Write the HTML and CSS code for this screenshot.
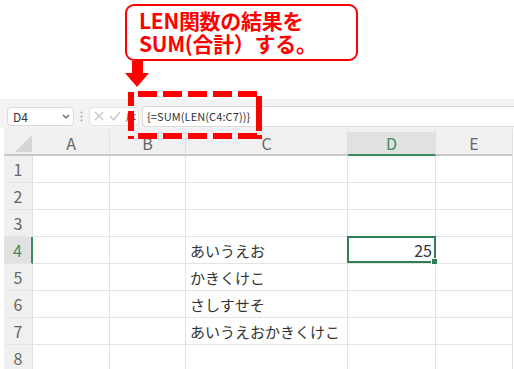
FILE: index.html
```html
<!DOCTYPE html>
<html>

<head>
    <meta charset="utf-8">
    <meta name="viewport" content="width=device-width, initial-scale=1">
    <link rel="stylesheet" href="styles.css">
</head>

<body>
    <!-- annotation: callout, arrow, dashed frame -->
    <div class="callout">LEN関数の結果を<br>SUM(合計）する。</div>
    <svg class="marks" width="514" height="369" viewBox="0 0 514 369">
        <rect x="132" y="61" width="11" height="13" fill="#ff0000" />
        <polygon points="125,73 149,73 137,87" fill="#ff0000" />
        <g stroke="#ff0000" stroke-width="6" fill="none">
            <path d="M138 94 H257" stroke-dasharray="19 6" />
            <path d="M138 136 H257" stroke-dasharray="19 6" />
            <path d="M131 92 V139" stroke-dasharray="14 5 20 5 4 40" />
            <path d="M259 96 V131 M259 135 V139" />
        </g>
    </svg>

    <div class="formula-bar">
        <div class="name-box">
            <span>D4</span>
            <svg width="8" height="5" viewBox="0 0 8 5">
                <path d="M1 1 L4 4 L7 1" stroke="#555" stroke-width="1.2" fill="none" />
            </svg>
        </div>
        <svg class="grip" width="3" height="11" viewBox="0 0 3 11">
            <circle cx="1.5" cy="1.5" r="1" fill="#aaa" />
            <circle cx="1.5" cy="5.5" r="1" fill="#aaa" />
            <circle cx="1.5" cy="9.5" r="1" fill="#aaa" />
        </svg>
        <div class="fn-box">
            <svg width="10" height="10" viewBox="0 0 10 10">
                <path d="M1 1 L9 9 M9 1 L1 9" stroke="#c4c4c4" stroke-width="1.2" />
            </svg>
            <svg width="12" height="10" viewBox="0 0 12 10">
                <path d="M1 5 L4.5 9 L11 1" stroke="#c4c4c4" stroke-width="1.2" fill="none" />
            </svg>
            <span class="fx"><i>f</i>x</span>
        </div>
        <div class="formula">{=SUM(LEN(C4:C7))}</div>
    </div>

    <div class="sheet">
        <div class="corner"><span class="tri"></span></div>
        <div class="col-head">A</div>
        <div class="col-head">B</div>
        <div class="col-head">C</div>
        <div class="col-head sel">D</div>
        <div class="col-head">E</div>

        <div class="row-head">1</div>
        <div class="cell"></div><div class="cell"></div><div class="cell"></div><div class="cell"></div><div class="cell"></div>

        <div class="row-head">2</div>
        <div class="cell"></div><div class="cell"></div><div class="cell"></div><div class="cell"></div><div class="cell"></div>

        <div class="row-head">3</div>
        <div class="cell"></div><div class="cell"></div><div class="cell"></div><div class="cell"></div><div class="cell"></div>

        <div class="row-head sel">4</div>
        <div class="cell"></div><div class="cell"></div>
        <div class="cell">あいうえお</div>
        <div class="cell num active">25</div>
        <div class="cell"></div>

        <div class="row-head">5</div>
        <div class="cell"></div><div class="cell"></div>
        <div class="cell">かきくけこ</div>
        <div class="cell"></div><div class="cell"></div>

        <div class="row-head">6</div>
        <div class="cell"></div><div class="cell"></div>
        <div class="cell">さしすせそ</div>
        <div class="cell"></div><div class="cell"></div>

        <div class="row-head">7</div>
        <div class="cell"></div><div class="cell"></div>
        <div class="cell">あいうえおかきくけこ</div>
        <div class="cell"></div><div class="cell"></div>

        <div class="row-head">8</div>
        <div class="cell"></div><div class="cell"></div><div class="cell"></div><div class="cell"></div><div class="cell"></div>
    </div>
</body>

</html>
```

FILE: styles.css
```css
* {
    box-sizing: border-box
}

body {
    font-family: "Noto Sans CJK JP", "Noto Sans", sans-serif;
    margin: 0;
    padding-top: 99px;
    background: #fff;
    color: #333;
    overflow: hidden;
}

/* Red note on top */
.callout {
    position: absolute;
    left: 125px;
    top: 4px;
    width: 233px;
    height: 57px;
    padding: 3px 0 0 12px;
    border: 2px solid #ff0000;
    border-radius: 9px;
    background: #fff;
    color: #ff0000;
    font-weight: bold;
    font-size: 21px;
    line-height: 23px;
    letter-spacing: -0.3px;
}

.marks {
    position: absolute;
    left: 0;
    top: 0;
    z-index: 5;
    pointer-events: none;
}

/* Formula bar */
.formula-bar {
    display: flex;
    align-items: center;
    height: 29px;
    padding: 6px 0 1px 7px;
    background: #f3f3f3;
}

.name-box {
    display: flex;
    align-items: center;
    justify-content: space-between;
    width: 67px;
    height: 19px;
    padding: 0 3px 0 5px;
    background: #fff;
    border: 1px solid #dadada;
    border-radius: 4px;
    font-size: 12px;
    color: #333;
}

.grip {
    margin: 0 6px 0 6px;
}

.fn-box {
    display: flex;
    align-items: center;
    gap: 5px;
    width: 50px;
    height: 19px;
    padding-left: 4px;
    background: #fff;
    border: 1px solid #e2e2e2;
    border-radius: 4px;
}

.fx {
    font-family: "DejaVu Serif", serif;
    font-size: 11px;
    color: #555;
}

.formula {
    flex: 1;
    height: 21px;
    margin-left: 3px;
    padding: 1px 0 0 4px;
    background: #fff;
    border: 1px solid #dadada;
    border-right: none;
    border-radius: 4px 0 0 4px;
    font-size: 11px;
    line-height: 17px;
    letter-spacing: 0.1px;
    color: #333;
}

/* Grid */
.sheet {
    display: grid;
    grid-template-columns: 29px 77px 76px 162px 88px 77px;
    grid-template-rows: 28px;
    grid-auto-rows: 27px;
    margin-left: 4px;
}

.corner,
.col-head {
    border-top: 4px solid #f0f0f0;
    border-bottom: 2px solid #c8c8c8;
    background: #f0f0f0;
}

.corner {
    position: relative;
}

.tri {
    position: absolute;
    right: 1px;
    bottom: 2px;
    width: 0;
    height: 0;
    border-left: 17px solid transparent;
    border-bottom: 17px solid #d6d6d6;
}

.col-head {
    display: flex;
    align-items: center;
    justify-content: center;
    border-right: 1px solid #e0e0e0;
    font-size: 16px;
    color: #666;
}

.col-head.sel {
    background: #e1e1e1;
    border-bottom-color: #3d8a5e;
    color: #3d8a5e;
}

.row-head {
    display: flex;
    align-items: center;
    justify-content: center;
    background: #f0f0f0;
    border-right: 1px solid #e0e0e0;
    border-bottom: 1px solid #e6e6e6;
    font-size: 16px;
    color: #666;
}

.row-head.sel {
    background: #e1e1e1;
    border-right: 2px solid #3d8a5e;
    color: #3d8a5e;
}

.cell {
    display: flex;
    align-items: center;
    padding-left: 4px;
    border-right: 1px solid #e3e3e3;
    border-bottom: 1px solid #e3e3e3;
    font-size: 15px;
    color: #333;
    white-space: nowrap;
}

.cell.num {
    justify-content: flex-end;
    padding-right: 3px;
    font-size: 16px;
}

/* Selected cell frame and fill handle */
.active {
    position: relative;
}

.active::after {
    content: "";
    position: absolute;
    left: -1px;
    top: -1px;
    right: -1px;
    bottom: 0;
    border: 2px solid #2f7d52;
}

.active::before {
    content: "";
    position: absolute;
    right: -3px;
    bottom: -2px;
    width: 5px;
    height: 5px;
    background: #2f7d52;
    border: 1px solid #fff;
    z-index: 2;
}
```
